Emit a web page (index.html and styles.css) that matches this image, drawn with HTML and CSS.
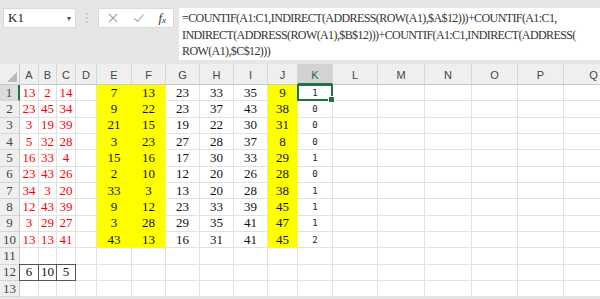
FILE: index.html
```html
<!DOCTYPE html>
<html lang="zh-Hant">
<head>
    <meta charset="UTF-8">
    <title>COUNTIF</title>
    <link rel="stylesheet" href="styles.css">
</head>
<body>
    <div class="formula-bar">
        <div class="name-box">
            <span>K1</span>
            <span class="arrow">&#9662;</span>
        </div>
        <div class="grip">&#8942;</div>
        <div class="fx-box">
            <svg class="icon" width="12" height="12" viewBox="0 0 12 12">
                <path d="M2 2 L10 10 M10 2 L2 10" stroke="#a6a6a6" stroke-width="1.1" fill="none"/>
            </svg>
            <svg class="icon" width="12" height="12" viewBox="0 0 12 12">
                <path d="M1.5 6.5 L4.5 9.5 L10.5 2.5" stroke="#a6a6a6" stroke-width="1.1" fill="none"/>
            </svg>
            <span class="fx">f<sub>x</sub></span>
        </div>
        <div class="formula">
            <div>=COUNTIF(A1:C1,INDIRECT(ADDRESS(ROW(A1),$A$12)))+COUNTIF(A1:C1,</div>
            <div>INDIRECT(ADDRESS(ROW(A1),$B$12)))+COUNTIF(A1:C1,INDIRECT(ADDRESS(</div>
            <div>ROW(A1),$C$12)))</div>
        </div>
    </div>

    <div class="sheet" id="sheet"></div>

    <script>
        const cols = ['A','B','C','D','E','F','G','H','I','J','K','L','M','N','O','P','Q'];
        const rows = [
            [13, 2, 14, '', 7, 13, 23, 33, 35, 9, 1],
            [23, 45, 34, '', 9, 22, 23, 37, 43, 38, 0],
            [3, 19, 39, '', 21, 15, 19, 22, 30, 31, 0],
            [5, 32, 28, '', 3, 23, 27, 28, 37, 8, 0],
            [16, 33, 4, '', 15, 16, 17, 30, 33, 29, 1],
            [23, 43, 26, '', 2, 10, 12, 20, 26, 28, 0],
            [34, 3, 20, '', 33, 3, 13, 20, 28, 38, 1],
            [12, 43, 39, '', 9, 12, 23, 33, 39, 45, 1],
            [3, 29, 27, '', 3, 28, 29, 35, 41, 47, 1],
            [13, 13, 41, '', 43, 13, 16, 31, 41, 45, 2],
            [],
            [6, 10, 5],
            []
        ];

        const sheet = document.getElementById('sheet');

        function cell(cls, text) {
            const div = document.createElement('div');
            div.className = cls;
            if (text !== undefined) div.textContent = text;
            sheet.appendChild(div);
            return div;
        }

        // cabecera
        cell('corner');
        cols.forEach(c => cell(c === 'K' ? 'col-head active' : 'col-head', c));

        rows.forEach((row, r) => {
            cell(r === 0 ? 'row-head active' : 'row-head', r + 1);
            cols.forEach((c, i) => {
                const value = row[i] !== undefined ? row[i] : '';
                let cls = 'cell';
                if (r < 10) {
                    if (i < 3) cls += ' red';
                    if (i === 4 || i === 5 || i === 9) cls += ' yellow';
                    if (i === 10) cls += ' result';
                }
                if (r === 11 && i < 3) cls += ' boxed';
                if (r === 0 && i === 10) cls += ' selected';
                cell(cls, value);
            });
        });
    </script>
</body>
</html>
```

FILE: styles.css
```css
body {
    margin: 0;
    padding: 0;
    background-color: #e6e6e6;
    font-family: "Liberation Serif", serif;
    overflow: hidden;
}

.formula-bar {
    display: flex;
    align-items: flex-start;
    height: 60px;
    padding: 8px 0 0 3px;
    box-sizing: border-box;
}

.name-box {
    display: flex;
    justify-content: space-between;
    align-items: center;
    width: 73px;
    height: 20px;
    padding: 0 4px 0 4px;
    box-sizing: border-box;
    background-color: #fff;
    border: 1px solid #dadada;
    font-size: 13px;
    color: #222;
}

.name-box .arrow {
    font-family: "DejaVu Sans", sans-serif;
    font-size: 8px;
    color: #555;
}

.grip {
    width: 22px;
    text-align: center;
    font-family: "DejaVu Sans", sans-serif;
    font-size: 12px;
    line-height: 20px;
    color: #b0b0b0;
}

.fx-box {
    display: flex;
    align-items: center;
    justify-content: space-between;
    width: 76px;
    height: 20px;
    padding: 0 7px 0 8px;
    box-sizing: border-box;
    background-color: #fff;
    border: 1px solid #dadada;
}

.fx {
    font-style: italic;
    font-size: 13px;
    color: #333;
    line-height: 1;
}

.fx sub {
    font-size: 9px;
    vertical-align: -1px;
}

.formula {
    flex: 1;
    height: 52px;
    margin-left: 5px;
    padding: 2px 0 0 3px;
    box-sizing: border-box;
    background-color: #fff;
    font-size: 12px;
    line-height: 16.5px;
    color: #333;
    white-space: nowrap;
    letter-spacing: -0.6px;
}

.sheet {
    display: grid;
    grid-template-columns: 20px 19px 18px 19px 21px 35px 34px 34px 34px 34px 30px 35px 45px 47px 47px 46px 46px 60px;
    grid-template-rows: 21px repeat(13, 16.33px);
    margin-top: 4px;
    background-color: #fff;
}

.corner, .col-head, .row-head {
    background-color: #efefef;
    color: #444;
}

.corner {
    position: relative;
    border-right: 1px solid #c8c8c8;
    border-bottom: 1px solid #c8c8c8;
}

.corner::after {
    content: "";
    position: absolute;
    right: 2px;
    bottom: 2px;
    border-left: 10px solid transparent;
    border-bottom: 10px solid #b8b8b8;
}

.col-head {
    display: flex;
    align-items: center;
    justify-content: center;
    font-family: "Liberation Sans", sans-serif;
    font-size: 11px;
    border-right: 1px solid #d6d6d6;
    border-bottom: 1px solid #c8c8c8;
    padding-top: 2px;
}

.col-head.active {
    background-color: #d3d3d3;
    color: #1e6b40;
    border-bottom: 2px solid #217346;
    padding-top: 3px;
}

.row-head {
    display: flex;
    align-items: center;
    justify-content: center;
    font-size: 13px;
    border-right: 1px solid #c8c8c8;
    border-bottom: 1px solid #d6d6d6;
}

.row-head.active {
    background-color: #dcdcdc;
    color: #1e6b40;
    border-right: 2px solid #217346;
}

.cell {
    display: flex;
    align-items: center;
    justify-content: center;
    font-size: 13px;
    color: #111;
    border-right: 1px solid #e1e1e1;
    border-bottom: 1px solid #e1e1e1;
}

.cell.red {
    color: #ff0000;
}

.cell.yellow {
    background-color: #ffff00;
    border-color: #ffff00;
}

.cell.result {
    font-family: "DejaVu Sans Mono", monospace;
    font-size: 9px;
    color: #222;
}

.cell.selected {
    position: relative;
    border: 2px solid #217346;
    margin: -1px 0 0 -1px;
}

.cell.selected::after {
    content: "";
    position: absolute;
    right: -4px;
    bottom: -4px;
    width: 5px;
    height: 5px;
    background-color: #217346;
    border: 1px solid #fff;
}

.cell.boxed {
    border: 1px solid #555;
    margin: -1px 0 0 -1px;
}
```
